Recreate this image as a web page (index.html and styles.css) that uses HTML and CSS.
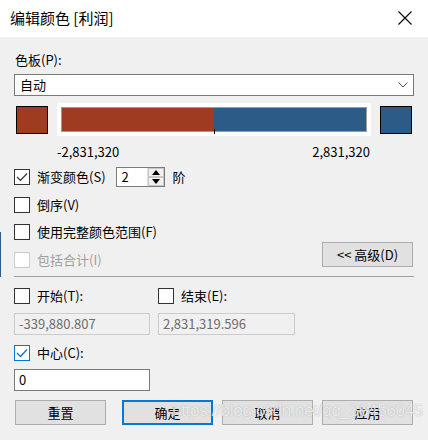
FILE: index.html
```html
<!DOCTYPE html>
<html lang="zh-CN">
<head>
<meta charset="utf-8">
<title>编辑颜色</title>
<link rel="stylesheet" href="styles.css">
</head>
<body>
<div class="dialog">
  <div class="titlebar">
    <span class="title">编辑颜色 [利润]</span>
    <svg class="close" width="14" height="14" viewBox="0 0 14 14"><path d="M0.5 0.5 L13.5 13.5 M13.5 0.5 L0.5 13.5" stroke="#000" stroke-width="1.1" fill="none"/></svg>
  </div>
  <div class="content">
    <div class="label palette-label">色板(P):</div>
    <div class="select">
      <span>自动</span>
      <svg class="chev" width="10" height="6" viewBox="0 0 10 6"><path d="M0.5 0.5 L5 5 L9.5 0.5" stroke="#555" stroke-width="1" fill="none"/></svg>
    </div>
    <div class="ramp-row">
      <div class="swatch red"></div>
      <div class="ramp-frame">
        <div class="ramp">
          <div class="seg red"></div>
          <div class="seg blue"></div>
          <span class="tick"></span>
        </div>
      </div>
      <div class="swatch blue"></div>
    </div>
    <div class="values">
      <span>-2,831,320</span>
      <span>2,831,320</span>
    </div>
    <div class="row steps-row">
      <span class="cb checked"><svg width="14" height="14" viewBox="0 0 14 14"><path d="M2 7 L5.5 10.5 L12 3.5" stroke="#333" stroke-width="1.2" fill="none"/></svg></span>
      <span class="cb-label">渐变颜色(S)</span>
      <div class="spin">
        <span class="spin-val">2</span>
        <div class="spin-btns">
          <span class="sbtn"><svg width="8" height="5" viewBox="0 0 8 5"><path d="M0 5 L4 0 L8 5 Z" fill="#000"/></svg></span>
          <span class="sbtn"><svg width="8" height="5" viewBox="0 0 8 5"><path d="M0 0 L4 5 L8 0 Z" fill="#000"/></svg></span>
        </div>
      </div>
      <span class="unit">阶</span>
    </div>
    <div class="row r-reverse">
      <span class="cb"></span>
      <span class="cb-label">倒序(V)</span>
    </div>
    <div class="row r-full">
      <span class="cb"></span>
      <span class="cb-label">使用完整颜色范围(F)</span>
    </div>
    <div class="row r-total">
      <div class="total">
        <span class="cb disabled"></span>
        <span class="cb-label disabled-text">包括合计(I)</span>
      </div>
      <div class="btn adv">&lt;&lt; 高级(D)</div>
    </div>
    <div class="sep"></div>
    <div class="row r-range">
      <div class="col">
        <span class="cb"></span>
        <span class="cb-label">开始(T):</span>
      </div>
      <div class="col">
        <span class="cb"></span>
        <span class="cb-label">结束(E):</span>
      </div>
    </div>
    <div class="row r-inputs">
      <div class="input disabled-input">-339,880.807</div>
      <div class="input disabled-input second">2,831,319.596</div>
    </div>
    <div class="row r-center">
      <span class="cb blue-cb"><svg width="14" height="14" viewBox="0 0 14 14"><path d="M2 7 L5.5 10.5 L12 3.5" stroke="#0078d7" stroke-width="1.3" fill="none"/></svg></span>
      <span class="cb-label">中心(C):</span>
    </div>
    <div class="input center-input">0</div>
    <div class="buttons">
      <div class="btn b-reset">重置</div>
      <div class="btn b-ok">确定</div>
      <div class="btn b-cancel">取消</div>
      <div class="btn b-apply">应用</div>
    </div>
  </div>
  <span class="edge"></span>
  <div class="watermark">https://blog.csdn.net/qq_36456045</div>
</div>
</body>
</html>
```
FILE: styles.css
```css
html, body {
  margin: 0;
  padding: 0;
}
body {
  width: 428px;
  height: 440px;
  overflow: hidden;
  background: #f0f0f0;
  font-family: "Noto Sans CJK SC", "Noto Sans", sans-serif;
  font-size: 13px;
  color: #000;
}
.dialog {
  position: relative;
  width: 428px;
  height: 440px;
  background: #f0f0f0;
}
.titlebar {
  height: 37px;
  background: #fff;
  display: flex;
  align-items: center;
  justify-content: space-between;
  padding: 0 16px 0 10px;
  box-sizing: border-box;
}
.title {
  font-size: 15px;
  line-height: 20px;
  margin-top: -2px;
}
.close {
  display: block;
  margin-top: -1px;
}
.content {
  padding: 0 14px;
}
.label {
  line-height: 16px;
}
.palette-label {
  margin-top: 15px;
  padding-left: 1px;
}
.select {
  margin-top: 6px;
  height: 22px;
  box-sizing: border-box;
  border: 1px solid #7a7a7a;
  background: #fff;
  display: flex;
  align-items: center;
  justify-content: space-between;
  padding: 0 5px 0 5px;
  line-height: 16px;
}
.chev {
  display: block;
}
.ramp-row {
  margin-top: 7px;
  height: 33px;
  display: flex;
  align-items: center;
}
.swatch {
  width: 32px;
  height: 28px;
  box-sizing: border-box;
  border: 1px solid #000;
}
.swatch.red {
  margin-left: 2px;
  background: #9e3b21;
}
.swatch.blue {
  margin-left: 9px;
  background: #2c5b88;
}
.ramp-frame {
  margin-left: 9px;
  width: 314px;
  height: 33px;
  box-sizing: border-box;
  background: #fff;
  padding: 4px;
}
.ramp {
  position: relative;
  height: 25px;
  box-sizing: border-box;
  border: 1px solid #a19c8f;
  display: flex;
}
.seg.red {
  width: 152px;
  background: #9e3b21;
}
.seg.blue {
  flex: 1;
  background: #2c5b88;
}
.tick {
  position: absolute;
  left: 152px;
  top: 21px;
  width: 1px;
  height: 5px;
  background: #000;
}
.values {
  margin-top: 8px;
  display: flex;
  justify-content: space-between;
  padding: 0 44px 0 43px;
  line-height: 16px;
}
.row {
  display: flex;
  align-items: center;
}
.cb {
  width: 16px;
  height: 16px;
  box-sizing: border-box;
  border: 1px solid #333;
  background: #fff;
  display: flex;
  align-items: center;
  justify-content: center;
  flex: none;
}
.cb.disabled {
  border-color: #cccccc;
}
.cb.blue-cb {
  border-color: #0078d7;
}
.cb svg {
  display: block;
}
.cb-label {
  margin-left: 7px;
  line-height: 16px;
}
.disabled-text {
  color: #a0a0a0;
}
.steps-row {
  margin-top: 7px;
  height: 20px;
}
.spin {
  margin-left: 10px;
  width: 49px;
  height: 20px;
  box-sizing: border-box;
  border: 1px solid #7a7a7a;
  background: #fff;
  display: flex;
  align-items: center;
  justify-content: space-between;
}
.spin-val {
  padding-left: 5px;
  line-height: 16px;
}
.spin-btns {
  width: 16px;
  height: 18px;
  display: flex;
  flex-direction: column;
  border-left: 1px solid #dcdcdc;
  margin-right: 0;
}
.sbtn {
  flex: 1;
  display: flex;
  align-items: center;
  justify-content: center;
  background: #f0f0f0;
  border: 1px solid #c8c8c8;
}
.sbtn svg {
  display: block;
}
.unit {
  margin-left: 8px;
  line-height: 16px;
}
.r-reverse {
  margin-top: 8px;
  height: 20px;
}
.r-full {
  margin-top: 7px;
  height: 20px;
}
.r-total {
  height: 26px;
  justify-content: space-between;
  align-items: flex-start;
}
.total {
  display: flex;
  align-items: center;
  margin-top: 10px;
}
.btn {
  box-sizing: border-box;
  height: 25px;
  background: #e1e1e1;
  border: 1px solid #adadad;
  display: flex;
  align-items: center;
  justify-content: center;
  line-height: 16px;
}
.adv {
  width: 91px;
  margin-right: 1px;
}
.sep {
  margin-top: 8px;
  height: 1px;
  background: #a0a0a0;
}
.r-range {
  margin-top: 11px;
  height: 16px;
}
.col {
  display: flex;
  align-items: center;
  width: 144px;
}
.r-inputs {
  margin-top: 9px;
}
.input {
  box-sizing: border-box;
  width: 136px;
  height: 22px;
  background: #fff;
  border: 1px solid #7a7a7a;
  padding-left: 4px;
  display: flex;
  align-items: center;
  line-height: 16px;
}
.disabled-input {
  background: #f0f0f0;
  border-color: #cccccc;
  color: #6d6d6d;
}
.disabled-input.second {
  margin-left: 8px;
  width: 137px;
}
.r-center {
  margin-top: 10px;
  height: 16px;
}
.center-input {
  margin-top: 8px;
}
.buttons {
  margin-top: 9px;
  display: flex;
}
.buttons .btn {
  width: 91px;
}
.b-reset {
  margin-left: 1px;
}
.b-ok {
  margin-left: 16px;
  border: 2px solid #0078d7 !important;
}
.b-cancel {
  margin-left: 9px;
}
.b-apply {
  margin-left: 9px;
}
.edge {
  position: absolute;
  left: 0;
  top: 232px;
  width: 1px;
  height: 45px;
  background: #2c5b88;
}
.watermark {
  position: absolute;
  left: 172px;
  top: 401px;
  font-family: "Liberation Sans", Arial, sans-serif;
  font-size: 17px;
  letter-spacing: -0.3px;
  color: rgba(255, 255, 255, 0.75);
  text-shadow: 0 0 1px rgba(120, 120, 120, 0.6);
  white-space: nowrap;
  pointer-events: none;
}
```
